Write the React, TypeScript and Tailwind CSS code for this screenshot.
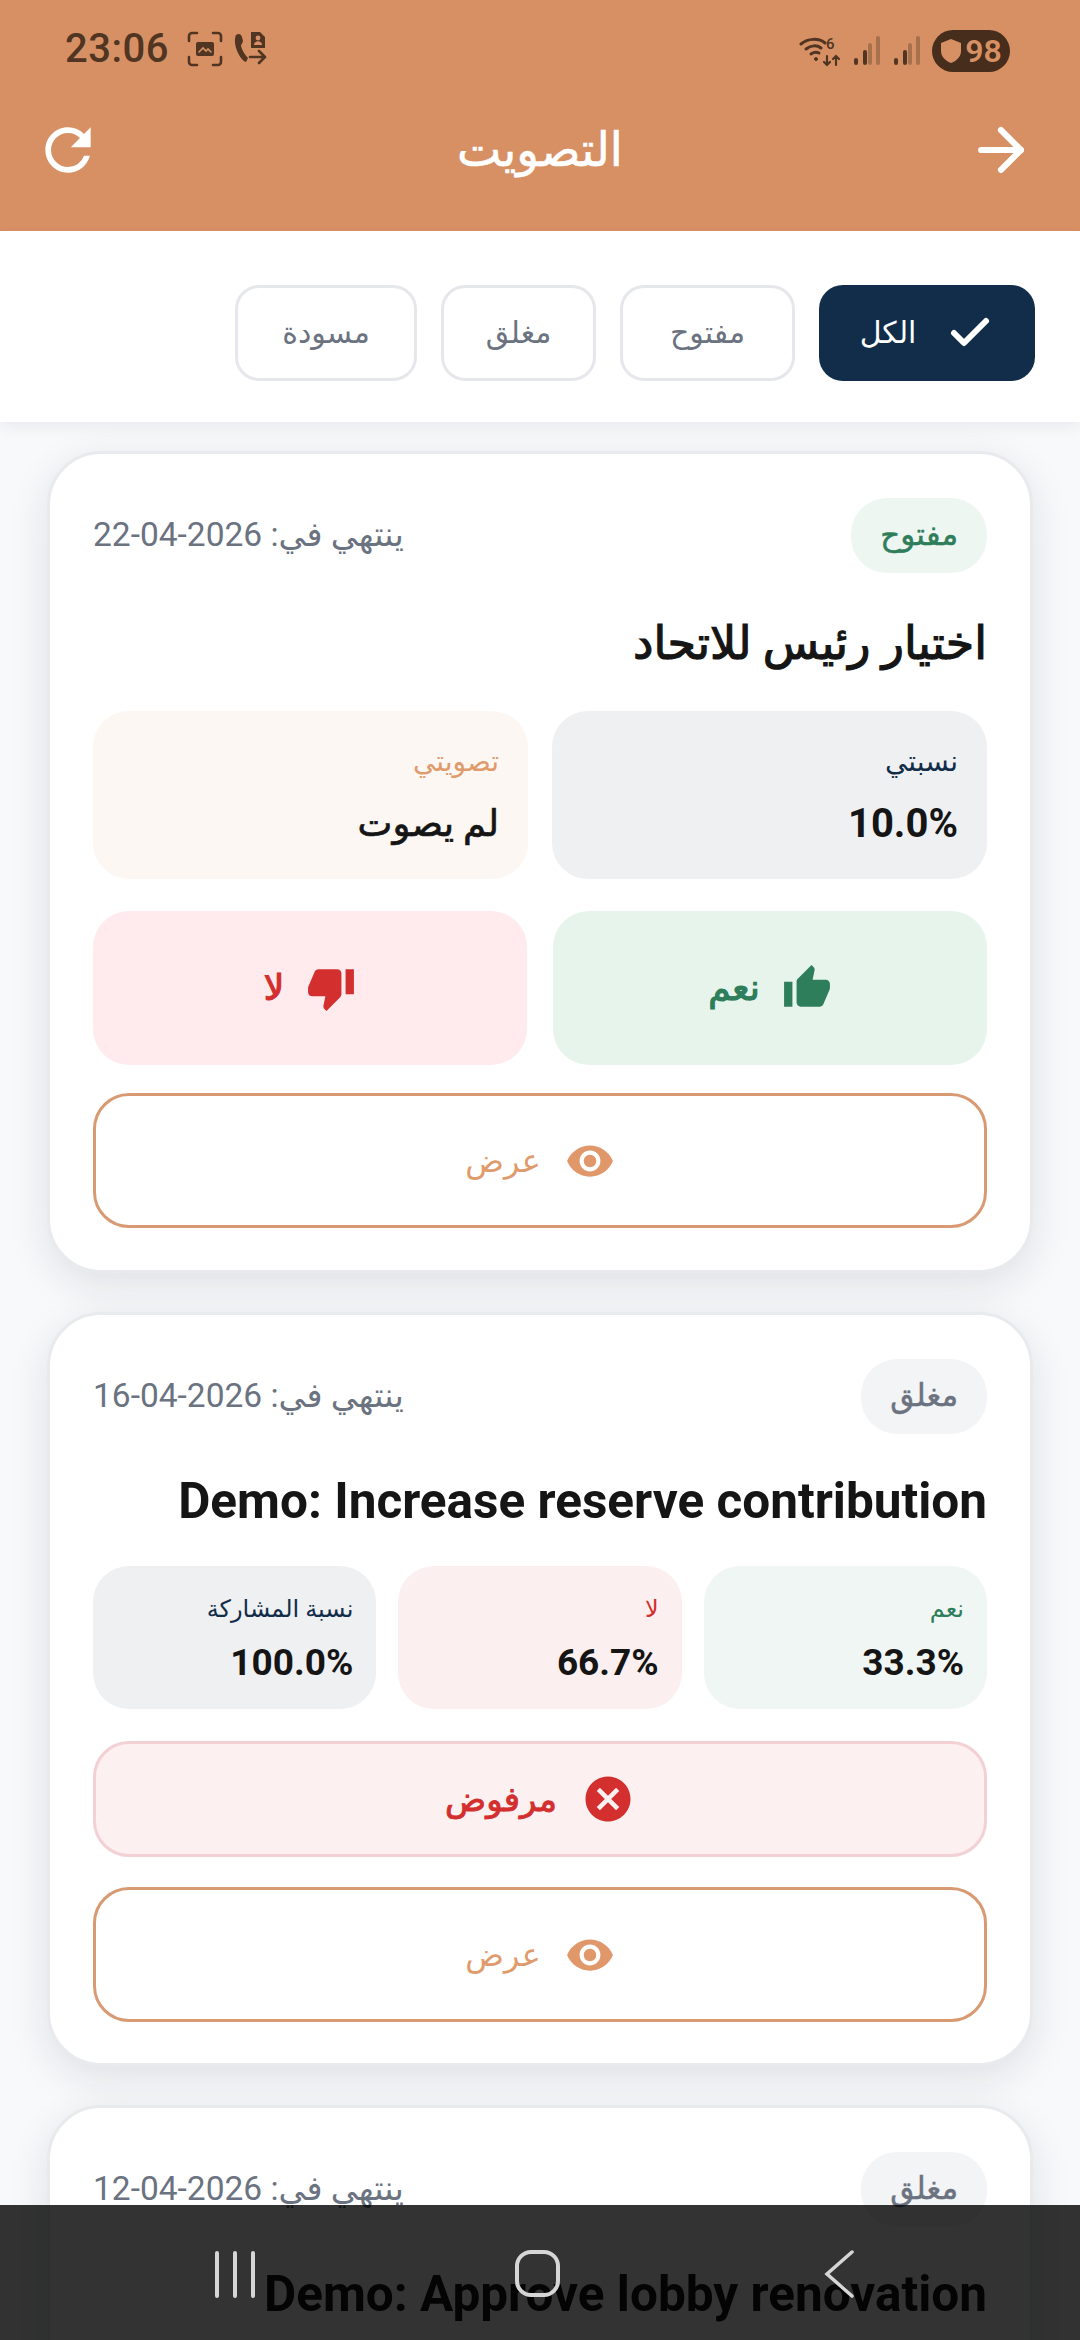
import React from 'react';
import { ArrowRight, Check } from 'lucide-react';
import { MdCancel, MdRefresh, MdThumbDown, MdThumbUp, MdVisibility } from 'react-icons/md';

const Signal = () => (
  <svg width="28" height="30" viewBox="0 0 28 30" strokeWidth="4" strokeLinecap="round">
    <path d="M3 27v-3M12 27V16" stroke="#4f3522" />
    <path d="M18 27V9M26 27V2" stroke="#a8714e" transform="translate(-1 0)" />
  </svg>
);

const StatusIcons = () => (
  <div className="flex items-center gap-[12px]" dir="ltr">
    <svg width="42" height="32" viewBox="0 0 42 32" fill="none" stroke="#4f3522" strokeWidth="3" strokeLinecap="round">
      <path d="M2 9C9 3 20 3 26 8" />
      <path d="M7 14c5-4 11-4 15-1" />
      <path d="M12 19c3-2 6-2 8-1" />
      <circle cx="17" cy="24" r="1.5" fill="#4f3522" strokeWidth="1" />
      <path d="M28 21v9M25 27l3 3 3-3M37 30v-9M34 24l3-3 3 3" strokeWidth="2.2" />
      <text x="27" y="14" fontSize="15" fontFamily="Roboto" fontWeight="500" fill="#4f3522" stroke="none">6</text>
    </svg>
    <Signal />
    <Signal />
  </div>
);

const FrameIcon = () => (
  <svg width="36" height="36" viewBox="0 0 36 36" fill="none" stroke="#4f3522" strokeWidth="2.6" strokeLinecap="round">
    <path d="M10 2H5a3 3 0 0 0-3 3v5M26 2h5a3 3 0 0 1 3 3v5M2 26v5a3 3 0 0 0 3 3h5M34 26v5a3 3 0 0 1-3 3h-5" />
    <rect x="9" y="11" width="18" height="14" rx="2" fill="#4f3522" stroke="none" />
    <path d="M12 21l4-4 3 3 2-2 3 3" stroke="#d79064" strokeWidth="1.6" />
  </svg>
);

const CallIcon = () => (
  <svg width="36" height="36" viewBox="0 0 36 36" fill="#4f3522">
    <path d="M4 4c3-2 5-1 6 2l1 4c0 2-2 3-2 5 1 4 4 9 7 12l-2 4C8 29 0 13 4 4z" />
    <path d="M19 1h9l5 5v11H19z" />
    <circle cx="26" cy="7" r="2.4" fill="#d79064" />
    <path d="M22 14c0-5 8-5 8 0z" fill="#d79064" />
    <path d="M18 26h15M27 20l6 6-6 6" fill="none" stroke="#4f3522" strokeWidth="2.6" strokeLinecap="round" />
  </svg>
);

const StatusBar = () => (
  <div className="flex h-[72px] items-end justify-between pr-[70px] pl-[65px]" dir="ltr">
    <div className="flex items-center">
      <span className="text-[40px] font-medium leading-[46px] tracking-[0.5px] text-[#4f3522]">23:06</span>
      <span className="ml-[18px]"><FrameIcon /></span>
      <span className="ml-[9px]"><CallIcon /></span>
    </div>
    <div className="flex items-center gap-[11px]">
      <StatusIcons />
      <div className="flex h-[42px] w-[78px] items-center justify-center gap-[3px] rounded-full bg-[#472d1c]">
        <svg width="22" height="26" viewBox="0 0 22 26" fill="#d79064">
          <path d="M11 1l10 4v8c0 6-5 10-10 12C6 23 1 19 1 13V5z" />
        </svg>
        <span className="text-[32px] font-semibold leading-none text-[#d79064]">98</span>
      </div>
    </div>
  </div>
);

const Chip = ({ label, width }: { label: string; width: string }) => (
  <div className={`flex h-[96px] items-center justify-center rounded-[24px] border-[3px] border-[#e5e7eb] bg-white text-[30px] text-[#6b7280] ${width}`}>
    {label}
  </div>
);

const ViewButton = () => (
  <div className="flex h-[135px] items-center justify-center gap-[24px] rounded-[36px] border-[3px] border-[#d79a72] bg-white text-[32px] text-[#e09b6d]">
    <MdVisibility size={50} color="#e0976a" />
    <span>عرض</span>
  </div>
);

const CardHead = ({ badge, badgeClass, date }: { badge: string; badgeClass: string; date: string }) => (
  <div className="flex items-center justify-between">
    <span className={`flex h-[75px] items-center rounded-[36px] px-[29px] text-[31px] [-webkit-text-stroke:0.5px] ${badgeClass}`}>
      {badge}
    </span>
    <span className="text-[33.5px] text-[#6b7280]">
      ينتهي في: <span dir="ltr">{date}</span>
    </span>
  </div>
);

type StatProps = {
  label: string;
  value: string;
  bg: string;
  labelClass: string;
  valueClass?: string;
  small?: boolean;
};

const Stat = ({ label, value, bg, labelClass, valueClass, small }: StatProps) => (
  <div className={`flex flex-1 flex-col justify-center rounded-[36px] ${bg} ${small ? 'h-[143px] gap-[14px] px-[23px]' : 'h-[168px] gap-[22px] px-[29px]'}`}>
    <span className={`${small ? 'text-[24px]' : 'text-[28px]'} leading-[36px] ${labelClass}`}>{label}</span>
    <span className={`leading-[44px] text-[#151515] ${valueClass ?? (small ? 'text-[37px] font-bold' : 'text-[40px] font-bold')}`}>{value}</span>
  </div>
);

const App: React.FC = () => {
  return (
    <div
      dir="rtl"
      className="relative h-[2340px] w-[1080px] overflow-hidden bg-[#f8f9fb] font-['Roboto','DejaVu_Sans',sans-serif]"
    >
      <header className="h-[231px] bg-[#d79064]">
        <StatusBar />
        <div className="flex h-[156px] items-center justify-between pr-[45px] pl-[34px] text-white">
          <ArrowRight size={68} strokeWidth={2.2} />
          <span className="mr-[-11px] text-[47px] [-webkit-text-stroke:0.6px]">التصويت</span>
          <MdRefresh size={68} />
        </div>
      </header>

      <div className="relative flex h-[191px] items-center gap-[24px] bg-white pt-[12px] pr-[45px] shadow-[0_6px_16px_rgba(17,24,39,0.06)]">
        <div className="flex h-[96px] w-[216px] items-center justify-center gap-[30px] rounded-[24px] bg-[#112d4a] text-[30px] text-white">
          <Check size={48} strokeWidth={3} />
          <span>الكل</span>
        </div>
        <Chip label="مفتوح" width="w-[175px]" />
        <Chip label="مغلق" width="w-[155px]" />
        <Chip label="مسودة" width="w-[182px]" />
      </div>

      <main className="flex flex-col gap-[39px] px-[47px] pt-[29px]">
        <section className="flex h-[822px] flex-col rounded-[54px] border-[3px] border-[#e8eaed] bg-white px-[43px] pt-[44px] shadow-[0_12px_40px_rgba(17,24,39,0.11)]">
          <CardHead badge="مفتوح" badgeClass="bg-[#eef6f1] text-[#2e7d5b]" date="22-04-2026" />
          <h2 className="mt-[39px] h-[62px] text-[46px] font-normal leading-[62px] text-[#151515] [-webkit-text-stroke:1.2px]">اختيار رئيس للاتحاد</h2>
          <div className="mt-[37px] flex gap-[24px]">
            <Stat label="نسبتي" value="10.0%" bg="bg-[#eff0f2]" labelClass="text-[#112d4a]" />
            <Stat label="تصويتي" value="لم يصوت" bg="bg-[#fdf7f3]" labelClass="text-[#e09b6d]" valueClass="text-[37px] [-webkit-text-stroke:0.7px]" />
          </div>
          <div className="mt-[32px] flex gap-[26px]">
            <div className="flex h-[154px] flex-1 items-center justify-center gap-[22px] rounded-[36px] bg-[#e6f4ec] text-[36px] text-[#2e7d5b] [-webkit-text-stroke:1.2px]">
              <MdThumbUp size={50} />
              <span>نعم</span>
            </div>
            <div className="flex h-[154px] flex-1 items-center justify-center gap-[22px] rounded-[36px] bg-[#ffebee] text-[36px] text-[#d32f2f] [-webkit-text-stroke:1.2px]">
              <MdThumbDown size={50} />
              <span>لا</span>
            </div>
          </div>
          <div className="mt-[28px]"><ViewButton /></div>
        </section>

        <section className="flex h-[754px] flex-col rounded-[54px] border-[3px] border-[#e8eaed] bg-white px-[43px] pt-[44px] shadow-[0_12px_40px_rgba(17,24,39,0.11)]">
          <CardHead badge="مغلق" badgeClass="bg-[#f3f4f6] text-[#6b7280]" date="16-04-2026" />
          <h2 className="mt-[36px] h-[62px] text-[49.5px] font-bold leading-[62px] text-[#151515]">Demo: Increase reserve contribution</h2>
          <div className="mt-[34px] flex gap-[22px]">
            <Stat small label="نعم" value="33.3%" bg="bg-[#f0f6f3]" labelClass="text-[#2e7d5b]" />
            <Stat small label="لا" value="66.7%" bg="bg-[#fbeff0]" labelClass="text-[#d32f2f]" />
            <Stat small label="نسبة المشاركة" value="100.0%" bg="bg-[#eff0f2]" labelClass="text-[#112d4a]" />
          </div>
          <div className="mt-[32px] flex h-[116px] items-center justify-center gap-[24px] rounded-[36px] border-[3px] border-[#f2d0d4] bg-[#fdf0f1] text-[34px] text-[#d32f2f] [-webkit-text-stroke:0.9px]">
            <MdCancel size={54} />
            <span>مرفوض</span>
          </div>
          <div className="mt-[30px]"><ViewButton /></div>
        </section>

        <section className="flex h-[700px] flex-col rounded-[54px] border-[3px] border-[#e8eaed] bg-white px-[43px] pt-[44px] shadow-[0_12px_40px_rgba(17,24,39,0.11)]">
          <CardHead badge="مغلق" badgeClass="bg-[#f3f4f6] text-[#6b7280]" date="12-04-2026" />
          <h2 className="mt-[36px] h-[62px] text-[49.5px] font-bold leading-[62px] text-[#151515]">Demo: Approve lobby renovation</h2>
        </section>
      </main>

      {/* system nav bar sits over the list */}
      <div className="absolute inset-x-0 bottom-0 h-[135px] bg-[rgba(0,0,0,0.8)]">
        <svg width="1080" height="135" viewBox="0 0 1080 135" fill="none" stroke="#d6d6d6" strokeWidth="4" strokeLinecap="round">
          <path d="M217 48v43M235 48v43M253 48v43" />
          <rect x="517" y="47" width="41" height="43" rx="14" />
          <path d="M852 47l-25 22 25 22" strokeWidth="3.5" />
        </svg>
      </div>
    </div>
  );
};

export default App;
